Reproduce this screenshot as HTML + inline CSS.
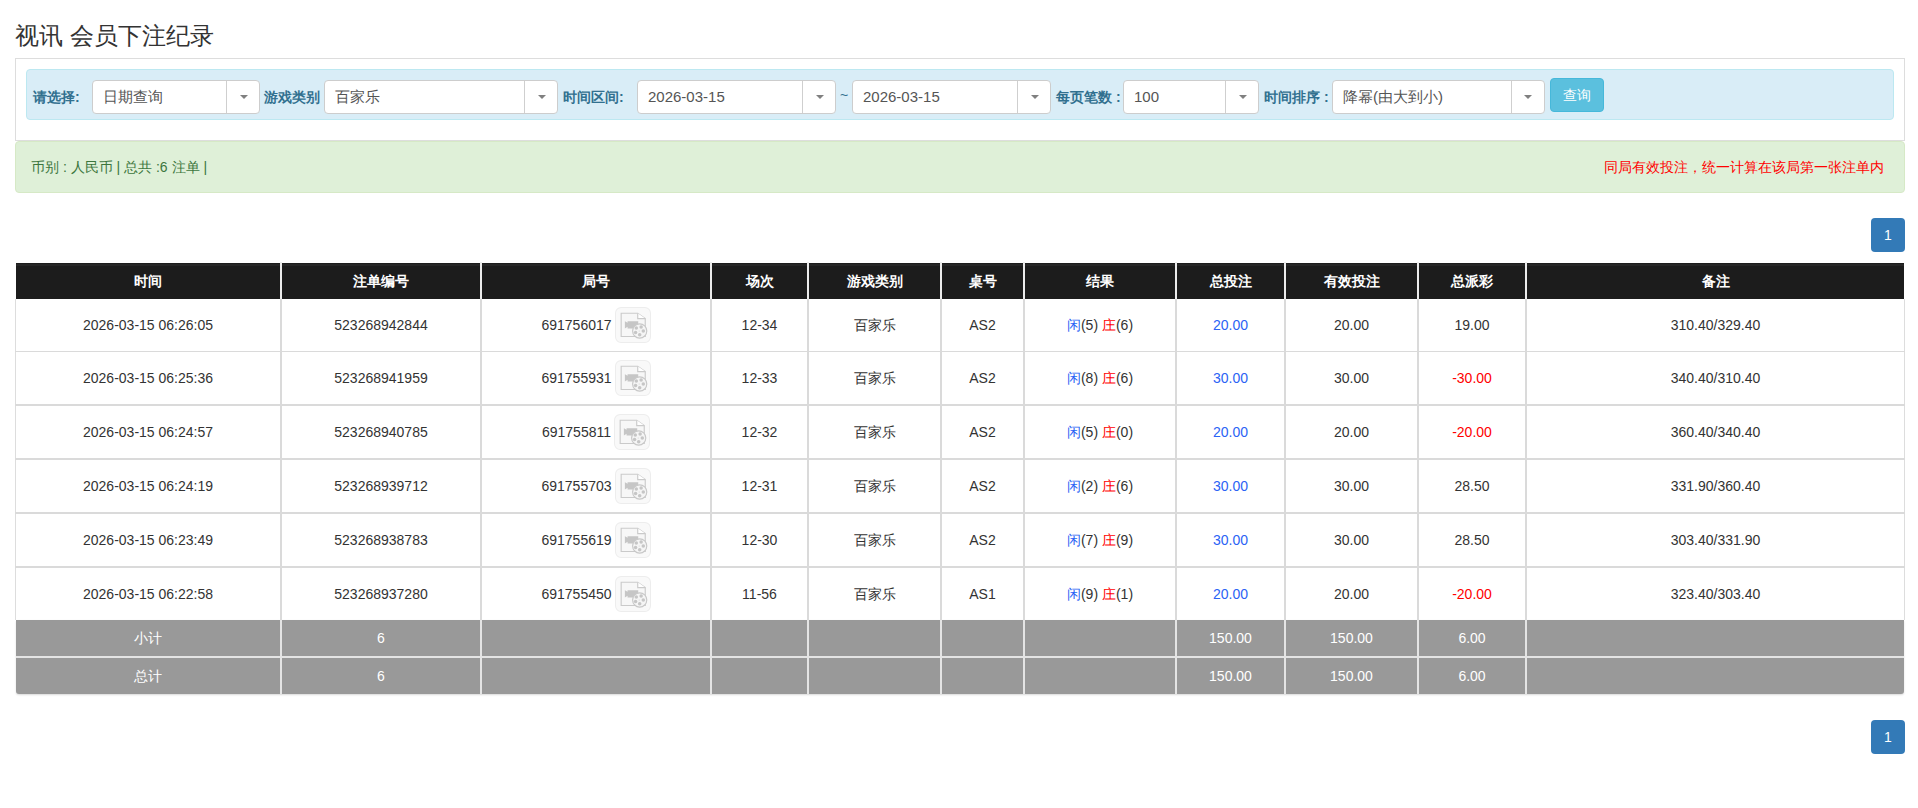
<!DOCTYPE html>
<html><head><meta charset="utf-8">
<style>
*{box-sizing:border-box;margin:0;padding:0}
html,body{width:1918px;height:808px;overflow:hidden;background:#fff}
body{font-family:"Liberation Sans",sans-serif;font-size:14px;color:#333;position:relative}
.abs{position:absolute}
h3{position:absolute;left:15px;top:21px;font-size:24px;font-weight:normal;line-height:30px;color:#333;white-space:nowrap}
.panel{position:absolute;left:15px;top:58px;width:1890px;height:83px;border:1px solid #ddd;background:#fff}
.ainfo{position:absolute;left:26px;top:69px;width:1868px;height:51px;background:#d9edf7;border:1px solid #bce8f1;border-radius:4px}
.lbl{position:absolute;top:88px;font-weight:bold;color:#31708f;font-size:14px;line-height:18px;white-space:nowrap}
.sel{position:absolute;top:80px;height:34px;background:#fff;border:1px solid #cdcdcd;border-radius:4px}
.sel .t{position:absolute;left:10px;top:7px;font-size:15px;line-height:18px;color:#555;white-space:nowrap}
.sel .d{position:absolute;top:0;bottom:0;width:1px;background:#cfcfcf}
.sel .c{position:absolute;top:14px;width:0;height:0;border-left:4px solid transparent;border-right:4px solid transparent;border-top:4px solid #808080}
.btn{position:absolute;left:1550px;top:78px;width:54px;height:34px;background:#5bc0de;border:1px solid #46b8da;border-radius:4px;color:#fff;font-size:14px;line-height:32px;text-align:center}
.asucc{position:absolute;left:15px;top:141px;width:1890px;height:52px;background:#dff0d8;border:1px solid #d6e9c6;border-radius:4px}
.cell{position:absolute;display:flex;align-items:center;justify-content:center;white-space:nowrap;font-size:14px;line-height:20px}
.in{display:inline-flex;align-items:center;white-space:pre}
.th{color:#fff;font-weight:bold}
.td{color:#333}
.tf{color:#fff}
.bl{color:#2b63f5}
.rd{color:#f00}
.ico{display:inline-block;width:36px;height:36px;margin-left:3px}
.ico svg{display:block}
.pg{position:absolute;left:1871px;width:34px;height:34px;background:#337ab7;border-radius:4px;color:#fff;font-weight:normal;font-size:14px;line-height:34px;text-align:center}
</style></head><body>
<h3>视讯 会员下注纪录</h3>
<div class="panel"></div>
<div class="ainfo"></div>

<div class="lbl" style="left:33px">请选择:</div>
<div class="sel" style="left:92px;width:168px"><span class="t">日期查询</span><span class="d" style="left:133px"></span><span class="c" style="left:147px"></span></div>
<div class="lbl" style="left:264px">游戏类别</div>
<div class="sel" style="left:324px;width:234px"><span class="t">百家乐</span><span class="d" style="left:199px"></span><span class="c" style="left:213px"></span></div>
<div class="lbl" style="left:563px">时间区间:</div>
<div class="sel" style="left:637px;width:199px"><span class="t">2026-03-15</span><span class="d" style="left:164px"></span><span class="c" style="left:178px"></span></div>
<div class="abs" style="left:840px;top:87px;color:#31708f;font-size:14px">~</div>
<div class="sel" style="left:852px;width:199px"><span class="t">2026-03-15</span><span class="d" style="left:164px"></span><span class="c" style="left:178px"></span></div>
<div class="lbl" style="left:1056px">每页笔数 :</div>
<div class="sel" style="left:1123px;width:136px"><span class="t">100</span><span class="d" style="left:101px"></span><span class="c" style="left:115px"></span></div>
<div class="lbl" style="left:1264px">时间排序 :</div>
<div class="sel" style="left:1332px;width:213px"><span class="t">降幂(由大到小)</span><span class="d" style="left:178px"></span><span class="c" style="left:191px"></span></div>
<div class="btn">查询</div>

<div class="asucc"></div>
<div class="abs" style="left:31px;top:158px;color:#3c763d;font-size:14px;line-height:18px;white-space:nowrap">币别 : 人民币 | 总共 :6 注单 |</div>
<div class="abs" style="left:1604px;top:158px;color:#f00;font-size:14px;line-height:18px;white-space:nowrap">同局有效投注，统一计算在该局第一张注单内</div>

<div class="pg" style="top:218px">1</div>

<!--TABLE-->
<div class="abs" style="left:16px;top:263px;width:1888px;height:36px;background:#1c1c1c"></div>
<div class="abs" style="left:16px;top:620px;width:1888px;height:74px;background:#999;border-radius:0 0 3px 3px;box-shadow:0 1px 2px rgba(0,0,0,.15)"></div>
<div class="abs" style="left:16px;top:264px;width:1888px;height:2px;background:#262626"></div>
<div class="abs" style="left:15px;top:299px;width:1px;height:321px;background:#ddd"></div>
<div class="abs" style="left:280px;top:262px;width:2px;height:37px;background:#ececec"></div>
<div class="abs" style="left:280px;top:299px;width:2px;height:321px;background:#dadada"></div>
<div class="abs" style="left:280px;top:620px;width:2px;height:74px;background:#e4e4e4"></div>
<div class="abs" style="left:480px;top:262px;width:2px;height:37px;background:#ececec"></div>
<div class="abs" style="left:480px;top:299px;width:2px;height:321px;background:#dadada"></div>
<div class="abs" style="left:480px;top:620px;width:2px;height:74px;background:#e4e4e4"></div>
<div class="abs" style="left:710px;top:262px;width:2px;height:37px;background:#ececec"></div>
<div class="abs" style="left:710px;top:299px;width:2px;height:321px;background:#dadada"></div>
<div class="abs" style="left:710px;top:620px;width:2px;height:74px;background:#e4e4e4"></div>
<div class="abs" style="left:807px;top:262px;width:2px;height:37px;background:#ececec"></div>
<div class="abs" style="left:807px;top:299px;width:2px;height:321px;background:#dadada"></div>
<div class="abs" style="left:807px;top:620px;width:2px;height:74px;background:#e4e4e4"></div>
<div class="abs" style="left:940px;top:262px;width:2px;height:37px;background:#ececec"></div>
<div class="abs" style="left:940px;top:299px;width:2px;height:321px;background:#dadada"></div>
<div class="abs" style="left:940px;top:620px;width:2px;height:74px;background:#e4e4e4"></div>
<div class="abs" style="left:1023px;top:262px;width:2px;height:37px;background:#ececec"></div>
<div class="abs" style="left:1023px;top:299px;width:2px;height:321px;background:#dadada"></div>
<div class="abs" style="left:1023px;top:620px;width:2px;height:74px;background:#e4e4e4"></div>
<div class="abs" style="left:1175px;top:262px;width:2px;height:37px;background:#ececec"></div>
<div class="abs" style="left:1175px;top:299px;width:2px;height:321px;background:#dadada"></div>
<div class="abs" style="left:1175px;top:620px;width:2px;height:74px;background:#e4e4e4"></div>
<div class="abs" style="left:1284px;top:262px;width:2px;height:37px;background:#ececec"></div>
<div class="abs" style="left:1284px;top:299px;width:2px;height:321px;background:#dadada"></div>
<div class="abs" style="left:1284px;top:620px;width:2px;height:74px;background:#e4e4e4"></div>
<div class="abs" style="left:1417px;top:262px;width:2px;height:37px;background:#ececec"></div>
<div class="abs" style="left:1417px;top:299px;width:2px;height:321px;background:#dadada"></div>
<div class="abs" style="left:1417px;top:620px;width:2px;height:74px;background:#e4e4e4"></div>
<div class="abs" style="left:1525px;top:262px;width:2px;height:37px;background:#ececec"></div>
<div class="abs" style="left:1525px;top:299px;width:2px;height:321px;background:#dadada"></div>
<div class="abs" style="left:1525px;top:620px;width:2px;height:74px;background:#e4e4e4"></div>
<div class="abs" style="left:1904px;top:299px;width:1px;height:321px;background:#ddd"></div>
<div class="abs" style="left:15px;top:351px;width:1890px;height:1px;background:#dadada"></div>
<div class="abs" style="left:15px;top:404px;width:1890px;height:2px;background:#dadada"></div>
<div class="abs" style="left:15px;top:458px;width:1890px;height:2px;background:#dadada"></div>
<div class="abs" style="left:15px;top:512px;width:1890px;height:2px;background:#dadada"></div>
<div class="abs" style="left:15px;top:566px;width:1890px;height:2px;background:#dadada"></div>
<div class="abs" style="left:16px;top:656px;width:1888px;height:2px;background:#e4e4e4"></div>
<div class="cell th" style="left:16px;top:263px;width:264px;height:36px"><span class="in">时间</span></div>
<div class="cell th" style="left:282px;top:263px;width:198px;height:36px"><span class="in">注单编号</span></div>
<div class="cell th" style="left:482px;top:263px;width:228px;height:36px"><span class="in">局号</span></div>
<div class="cell th" style="left:712px;top:263px;width:95px;height:36px"><span class="in">场次</span></div>
<div class="cell th" style="left:809px;top:263px;width:131px;height:36px"><span class="in">游戏类别</span></div>
<div class="cell th" style="left:942px;top:263px;width:81px;height:36px"><span class="in">桌号</span></div>
<div class="cell th" style="left:1025px;top:263px;width:150px;height:36px"><span class="in">结果</span></div>
<div class="cell th" style="left:1177px;top:263px;width:107px;height:36px"><span class="in">总投注</span></div>
<div class="cell th" style="left:1286px;top:263px;width:131px;height:36px"><span class="in">有效投注</span></div>
<div class="cell th" style="left:1419px;top:263px;width:106px;height:36px"><span class="in">总派彩</span></div>
<div class="cell th" style="left:1527px;top:263px;width:377px;height:36px"><span class="in">备注</span></div>
<div class="cell td" style="left:16px;top:299px;width:264px;height:52px"><span class="in">2026-03-15 06:26:05</span></div>
<div class="cell td" style="left:282px;top:299px;width:198px;height:52px"><span class="in">523268942844</span></div>
<div class="cell td" style="left:482px;top:299px;width:228px;height:52px"><span class="in">691756017<span class="ico"><svg width="36" height="36" viewBox="0 0 35 35"><rect x="0.5" y="0.5" width="34" height="34" rx="5.5" fill="#f9f9f9" stroke="#ededed"/><path d="M6 6.1h16.1l7.3 5.2v17.4H6z" fill="#f7f7f7" stroke="#cacaca" stroke-width="1.1"/><path d="M22.1 6.1v5.2h7.3" fill="#fff" stroke="#cacaca" stroke-width="1.1"/><path d="M9.6 13.8l2.6 1.6v-1.6h10.4v7.1H12.2v-1.6l-2.6 1.6z" fill="#c6c6c6"/><circle cx="24" cy="23.3" r="6.9" fill="#f5f5f5" stroke="#c8c8c8" stroke-width="1.1"/><circle cx="20.7" cy="20.4" r="1.7" fill="#c6c6c6"/><circle cx="25.4" cy="19.5" r="1.7" fill="#c6c6c6"/><circle cx="27.5" cy="23.3" r="1.7" fill="#c6c6c6"/><circle cx="20" cy="24.9" r="1.7" fill="#c6c6c6"/><circle cx="24" cy="27" r="1.7" fill="#c6c6c6"/><circle cx="23.5" cy="23.3" r="0.5" fill="#cfcfcf"/></svg></span></span></div>
<div class="cell td" style="left:712px;top:299px;width:95px;height:52px"><span class="in">12-34</span></div>
<div class="cell td" style="left:809px;top:299px;width:131px;height:52px"><span class="in">百家乐</span></div>
<div class="cell td" style="left:942px;top:299px;width:81px;height:52px"><span class="in">AS2</span></div>
<div class="cell td" style="left:1025px;top:299px;width:150px;height:52px"><span class="in"><span class="bl">闲</span>(5) <span class="rd">庄</span>(6)</span></div>
<div class="cell td" style="left:1177px;top:299px;width:107px;height:52px"><span class="in"><span class="bl">20.00</span></span></div>
<div class="cell td" style="left:1286px;top:299px;width:131px;height:52px"><span class="in">20.00</span></div>
<div class="cell td" style="left:1419px;top:299px;width:106px;height:52px"><span class="in">19.00</span></div>
<div class="cell td" style="left:1527px;top:299px;width:377px;height:52px"><span class="in">310.40/329.40</span></div>
<div class="cell td" style="left:16px;top:352px;width:264px;height:52px"><span class="in">2026-03-15 06:25:36</span></div>
<div class="cell td" style="left:282px;top:352px;width:198px;height:52px"><span class="in">523268941959</span></div>
<div class="cell td" style="left:482px;top:352px;width:228px;height:52px"><span class="in">691755931<span class="ico"><svg width="36" height="36" viewBox="0 0 35 35"><rect x="0.5" y="0.5" width="34" height="34" rx="5.5" fill="#f9f9f9" stroke="#ededed"/><path d="M6 6.1h16.1l7.3 5.2v17.4H6z" fill="#f7f7f7" stroke="#cacaca" stroke-width="1.1"/><path d="M22.1 6.1v5.2h7.3" fill="#fff" stroke="#cacaca" stroke-width="1.1"/><path d="M9.6 13.8l2.6 1.6v-1.6h10.4v7.1H12.2v-1.6l-2.6 1.6z" fill="#c6c6c6"/><circle cx="24" cy="23.3" r="6.9" fill="#f5f5f5" stroke="#c8c8c8" stroke-width="1.1"/><circle cx="20.7" cy="20.4" r="1.7" fill="#c6c6c6"/><circle cx="25.4" cy="19.5" r="1.7" fill="#c6c6c6"/><circle cx="27.5" cy="23.3" r="1.7" fill="#c6c6c6"/><circle cx="20" cy="24.9" r="1.7" fill="#c6c6c6"/><circle cx="24" cy="27" r="1.7" fill="#c6c6c6"/><circle cx="23.5" cy="23.3" r="0.5" fill="#cfcfcf"/></svg></span></span></div>
<div class="cell td" style="left:712px;top:352px;width:95px;height:52px"><span class="in">12-33</span></div>
<div class="cell td" style="left:809px;top:352px;width:131px;height:52px"><span class="in">百家乐</span></div>
<div class="cell td" style="left:942px;top:352px;width:81px;height:52px"><span class="in">AS2</span></div>
<div class="cell td" style="left:1025px;top:352px;width:150px;height:52px"><span class="in"><span class="bl">闲</span>(8) <span class="rd">庄</span>(6)</span></div>
<div class="cell td" style="left:1177px;top:352px;width:107px;height:52px"><span class="in"><span class="bl">30.00</span></span></div>
<div class="cell td" style="left:1286px;top:352px;width:131px;height:52px"><span class="in">30.00</span></div>
<div class="cell td" style="left:1419px;top:352px;width:106px;height:52px"><span class="in"><span class="rd">-30.00</span></span></div>
<div class="cell td" style="left:1527px;top:352px;width:377px;height:52px"><span class="in">340.40/310.40</span></div>
<div class="cell td" style="left:16px;top:406px;width:264px;height:52px"><span class="in">2026-03-15 06:24:57</span></div>
<div class="cell td" style="left:282px;top:406px;width:198px;height:52px"><span class="in">523268940785</span></div>
<div class="cell td" style="left:482px;top:406px;width:228px;height:52px"><span class="in">691755811<span class="ico"><svg width="36" height="36" viewBox="0 0 35 35"><rect x="0.5" y="0.5" width="34" height="34" rx="5.5" fill="#f9f9f9" stroke="#ededed"/><path d="M6 6.1h16.1l7.3 5.2v17.4H6z" fill="#f7f7f7" stroke="#cacaca" stroke-width="1.1"/><path d="M22.1 6.1v5.2h7.3" fill="#fff" stroke="#cacaca" stroke-width="1.1"/><path d="M9.6 13.8l2.6 1.6v-1.6h10.4v7.1H12.2v-1.6l-2.6 1.6z" fill="#c6c6c6"/><circle cx="24" cy="23.3" r="6.9" fill="#f5f5f5" stroke="#c8c8c8" stroke-width="1.1"/><circle cx="20.7" cy="20.4" r="1.7" fill="#c6c6c6"/><circle cx="25.4" cy="19.5" r="1.7" fill="#c6c6c6"/><circle cx="27.5" cy="23.3" r="1.7" fill="#c6c6c6"/><circle cx="20" cy="24.9" r="1.7" fill="#c6c6c6"/><circle cx="24" cy="27" r="1.7" fill="#c6c6c6"/><circle cx="23.5" cy="23.3" r="0.5" fill="#cfcfcf"/></svg></span></span></div>
<div class="cell td" style="left:712px;top:406px;width:95px;height:52px"><span class="in">12-32</span></div>
<div class="cell td" style="left:809px;top:406px;width:131px;height:52px"><span class="in">百家乐</span></div>
<div class="cell td" style="left:942px;top:406px;width:81px;height:52px"><span class="in">AS2</span></div>
<div class="cell td" style="left:1025px;top:406px;width:150px;height:52px"><span class="in"><span class="bl">闲</span>(5) <span class="rd">庄</span>(0)</span></div>
<div class="cell td" style="left:1177px;top:406px;width:107px;height:52px"><span class="in"><span class="bl">20.00</span></span></div>
<div class="cell td" style="left:1286px;top:406px;width:131px;height:52px"><span class="in">20.00</span></div>
<div class="cell td" style="left:1419px;top:406px;width:106px;height:52px"><span class="in"><span class="rd">-20.00</span></span></div>
<div class="cell td" style="left:1527px;top:406px;width:377px;height:52px"><span class="in">360.40/340.40</span></div>
<div class="cell td" style="left:16px;top:460px;width:264px;height:52px"><span class="in">2026-03-15 06:24:19</span></div>
<div class="cell td" style="left:282px;top:460px;width:198px;height:52px"><span class="in">523268939712</span></div>
<div class="cell td" style="left:482px;top:460px;width:228px;height:52px"><span class="in">691755703<span class="ico"><svg width="36" height="36" viewBox="0 0 35 35"><rect x="0.5" y="0.5" width="34" height="34" rx="5.5" fill="#f9f9f9" stroke="#ededed"/><path d="M6 6.1h16.1l7.3 5.2v17.4H6z" fill="#f7f7f7" stroke="#cacaca" stroke-width="1.1"/><path d="M22.1 6.1v5.2h7.3" fill="#fff" stroke="#cacaca" stroke-width="1.1"/><path d="M9.6 13.8l2.6 1.6v-1.6h10.4v7.1H12.2v-1.6l-2.6 1.6z" fill="#c6c6c6"/><circle cx="24" cy="23.3" r="6.9" fill="#f5f5f5" stroke="#c8c8c8" stroke-width="1.1"/><circle cx="20.7" cy="20.4" r="1.7" fill="#c6c6c6"/><circle cx="25.4" cy="19.5" r="1.7" fill="#c6c6c6"/><circle cx="27.5" cy="23.3" r="1.7" fill="#c6c6c6"/><circle cx="20" cy="24.9" r="1.7" fill="#c6c6c6"/><circle cx="24" cy="27" r="1.7" fill="#c6c6c6"/><circle cx="23.5" cy="23.3" r="0.5" fill="#cfcfcf"/></svg></span></span></div>
<div class="cell td" style="left:712px;top:460px;width:95px;height:52px"><span class="in">12-31</span></div>
<div class="cell td" style="left:809px;top:460px;width:131px;height:52px"><span class="in">百家乐</span></div>
<div class="cell td" style="left:942px;top:460px;width:81px;height:52px"><span class="in">AS2</span></div>
<div class="cell td" style="left:1025px;top:460px;width:150px;height:52px"><span class="in"><span class="bl">闲</span>(2) <span class="rd">庄</span>(6)</span></div>
<div class="cell td" style="left:1177px;top:460px;width:107px;height:52px"><span class="in"><span class="bl">30.00</span></span></div>
<div class="cell td" style="left:1286px;top:460px;width:131px;height:52px"><span class="in">30.00</span></div>
<div class="cell td" style="left:1419px;top:460px;width:106px;height:52px"><span class="in">28.50</span></div>
<div class="cell td" style="left:1527px;top:460px;width:377px;height:52px"><span class="in">331.90/360.40</span></div>
<div class="cell td" style="left:16px;top:514px;width:264px;height:52px"><span class="in">2026-03-15 06:23:49</span></div>
<div class="cell td" style="left:282px;top:514px;width:198px;height:52px"><span class="in">523268938783</span></div>
<div class="cell td" style="left:482px;top:514px;width:228px;height:52px"><span class="in">691755619<span class="ico"><svg width="36" height="36" viewBox="0 0 35 35"><rect x="0.5" y="0.5" width="34" height="34" rx="5.5" fill="#f9f9f9" stroke="#ededed"/><path d="M6 6.1h16.1l7.3 5.2v17.4H6z" fill="#f7f7f7" stroke="#cacaca" stroke-width="1.1"/><path d="M22.1 6.1v5.2h7.3" fill="#fff" stroke="#cacaca" stroke-width="1.1"/><path d="M9.6 13.8l2.6 1.6v-1.6h10.4v7.1H12.2v-1.6l-2.6 1.6z" fill="#c6c6c6"/><circle cx="24" cy="23.3" r="6.9" fill="#f5f5f5" stroke="#c8c8c8" stroke-width="1.1"/><circle cx="20.7" cy="20.4" r="1.7" fill="#c6c6c6"/><circle cx="25.4" cy="19.5" r="1.7" fill="#c6c6c6"/><circle cx="27.5" cy="23.3" r="1.7" fill="#c6c6c6"/><circle cx="20" cy="24.9" r="1.7" fill="#c6c6c6"/><circle cx="24" cy="27" r="1.7" fill="#c6c6c6"/><circle cx="23.5" cy="23.3" r="0.5" fill="#cfcfcf"/></svg></span></span></div>
<div class="cell td" style="left:712px;top:514px;width:95px;height:52px"><span class="in">12-30</span></div>
<div class="cell td" style="left:809px;top:514px;width:131px;height:52px"><span class="in">百家乐</span></div>
<div class="cell td" style="left:942px;top:514px;width:81px;height:52px"><span class="in">AS2</span></div>
<div class="cell td" style="left:1025px;top:514px;width:150px;height:52px"><span class="in"><span class="bl">闲</span>(7) <span class="rd">庄</span>(9)</span></div>
<div class="cell td" style="left:1177px;top:514px;width:107px;height:52px"><span class="in"><span class="bl">30.00</span></span></div>
<div class="cell td" style="left:1286px;top:514px;width:131px;height:52px"><span class="in">30.00</span></div>
<div class="cell td" style="left:1419px;top:514px;width:106px;height:52px"><span class="in">28.50</span></div>
<div class="cell td" style="left:1527px;top:514px;width:377px;height:52px"><span class="in">303.40/331.90</span></div>
<div class="cell td" style="left:16px;top:568px;width:264px;height:52px"><span class="in">2026-03-15 06:22:58</span></div>
<div class="cell td" style="left:282px;top:568px;width:198px;height:52px"><span class="in">523268937280</span></div>
<div class="cell td" style="left:482px;top:568px;width:228px;height:52px"><span class="in">691755450<span class="ico"><svg width="36" height="36" viewBox="0 0 35 35"><rect x="0.5" y="0.5" width="34" height="34" rx="5.5" fill="#f9f9f9" stroke="#ededed"/><path d="M6 6.1h16.1l7.3 5.2v17.4H6z" fill="#f7f7f7" stroke="#cacaca" stroke-width="1.1"/><path d="M22.1 6.1v5.2h7.3" fill="#fff" stroke="#cacaca" stroke-width="1.1"/><path d="M9.6 13.8l2.6 1.6v-1.6h10.4v7.1H12.2v-1.6l-2.6 1.6z" fill="#c6c6c6"/><circle cx="24" cy="23.3" r="6.9" fill="#f5f5f5" stroke="#c8c8c8" stroke-width="1.1"/><circle cx="20.7" cy="20.4" r="1.7" fill="#c6c6c6"/><circle cx="25.4" cy="19.5" r="1.7" fill="#c6c6c6"/><circle cx="27.5" cy="23.3" r="1.7" fill="#c6c6c6"/><circle cx="20" cy="24.9" r="1.7" fill="#c6c6c6"/><circle cx="24" cy="27" r="1.7" fill="#c6c6c6"/><circle cx="23.5" cy="23.3" r="0.5" fill="#cfcfcf"/></svg></span></span></div>
<div class="cell td" style="left:712px;top:568px;width:95px;height:52px"><span class="in">11-56</span></div>
<div class="cell td" style="left:809px;top:568px;width:131px;height:52px"><span class="in">百家乐</span></div>
<div class="cell td" style="left:942px;top:568px;width:81px;height:52px"><span class="in">AS1</span></div>
<div class="cell td" style="left:1025px;top:568px;width:150px;height:52px"><span class="in"><span class="bl">闲</span>(9) <span class="rd">庄</span>(1)</span></div>
<div class="cell td" style="left:1177px;top:568px;width:107px;height:52px"><span class="in"><span class="bl">20.00</span></span></div>
<div class="cell td" style="left:1286px;top:568px;width:131px;height:52px"><span class="in">20.00</span></div>
<div class="cell td" style="left:1419px;top:568px;width:106px;height:52px"><span class="in"><span class="rd">-20.00</span></span></div>
<div class="cell td" style="left:1527px;top:568px;width:377px;height:52px"><span class="in">323.40/303.40</span></div>
<div class="cell tf" style="left:16px;top:620px;width:264px;height:36px"><span class="in">小计</span></div>
<div class="cell tf" style="left:282px;top:620px;width:198px;height:36px"><span class="in">6</span></div>
<div class="cell tf" style="left:1177px;top:620px;width:107px;height:36px"><span class="in">150.00</span></div>
<div class="cell tf" style="left:1286px;top:620px;width:131px;height:36px"><span class="in">150.00</span></div>
<div class="cell tf" style="left:1419px;top:620px;width:106px;height:36px"><span class="in">6.00</span></div>
<div class="cell tf" style="left:16px;top:658px;width:264px;height:36px"><span class="in">总计</span></div>
<div class="cell tf" style="left:282px;top:658px;width:198px;height:36px"><span class="in">6</span></div>
<div class="cell tf" style="left:1177px;top:658px;width:107px;height:36px"><span class="in">150.00</span></div>
<div class="cell tf" style="left:1286px;top:658px;width:131px;height:36px"><span class="in">150.00</span></div>
<div class="cell tf" style="left:1419px;top:658px;width:106px;height:36px"><span class="in">6.00</span></div>
<!--/TABLE-->

<div class="pg" style="top:720px">1</div>
</body></html>
